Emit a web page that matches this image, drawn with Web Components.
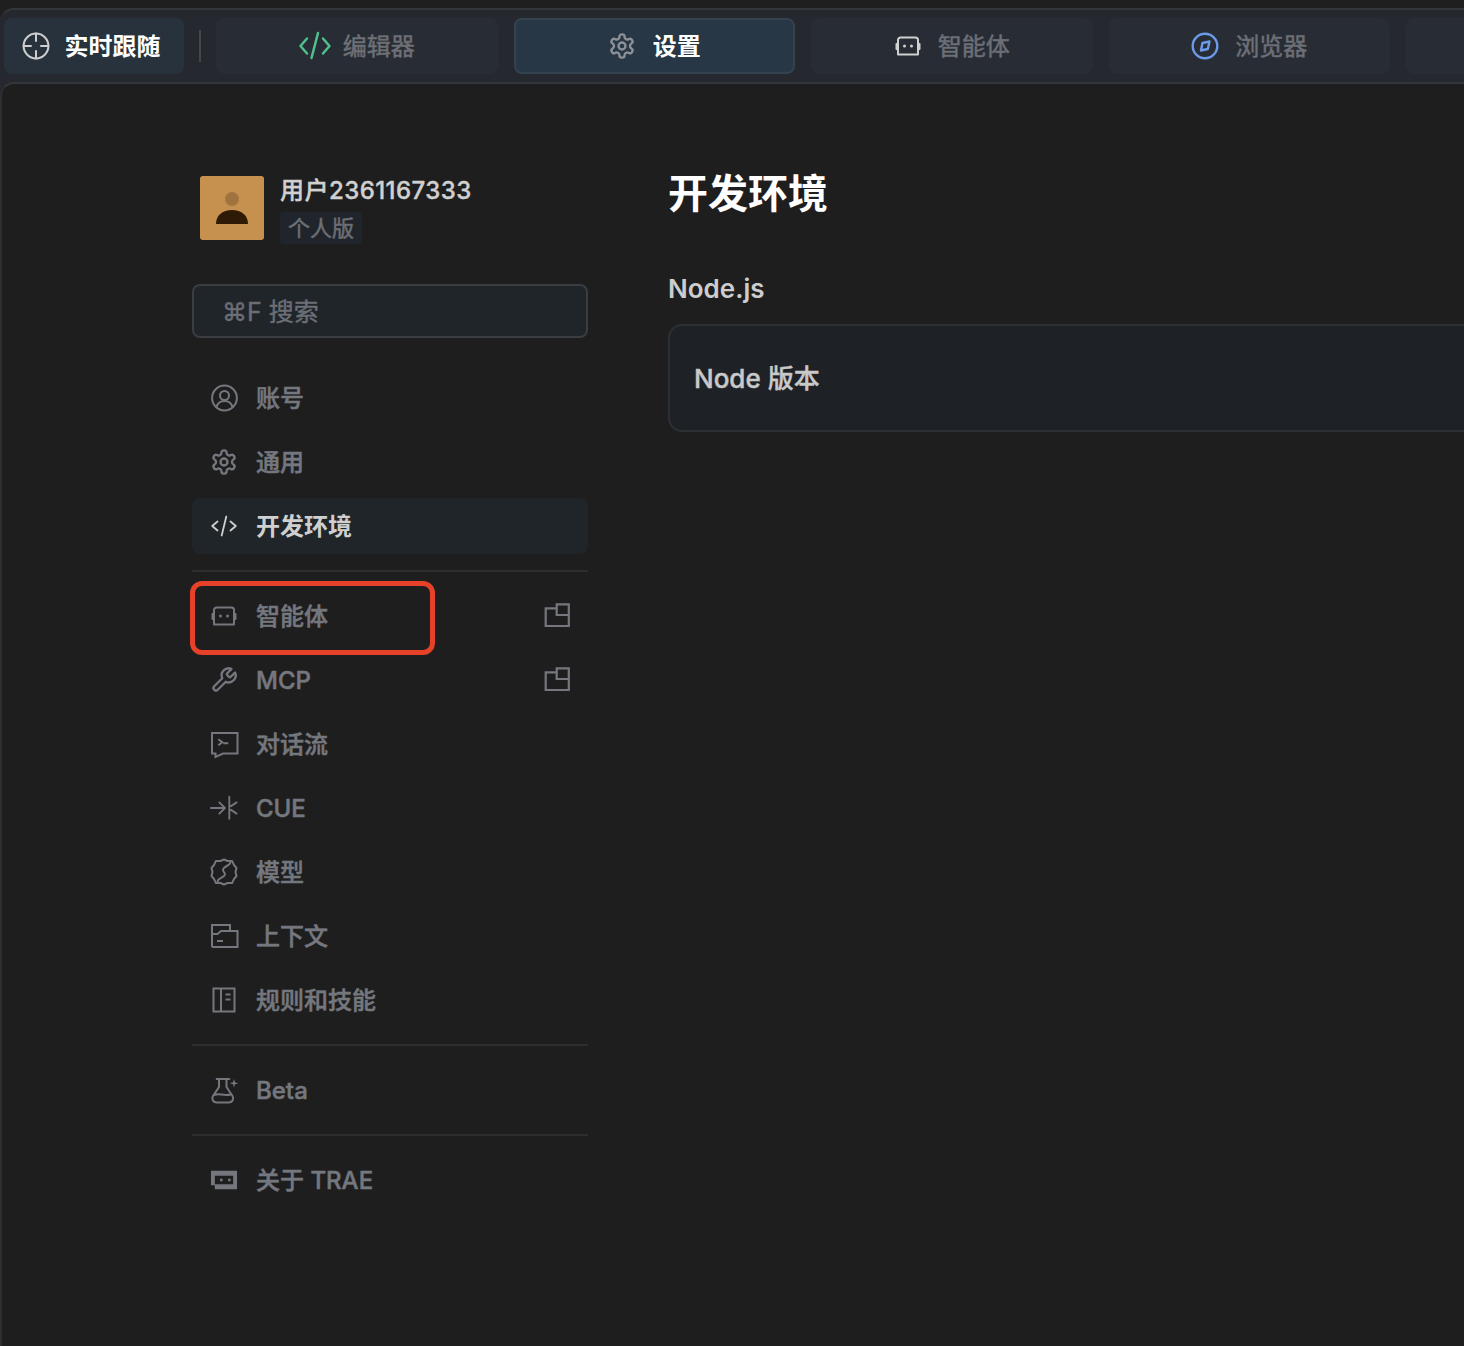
<!DOCTYPE html>
<html lang="zh"><head><meta charset="utf-8"><title>设置</title>
<style>
html,body{margin:0;height:100%;background:#1e1e1e;overflow:hidden}
body{font-family:Inter,"Noto Sans CJK SC",sans-serif;position:relative}
</style></head><body>
<x-app></x-app>
<script>
const gear='<path d="M12.22 2h-.44a2 2 0 0 0-2 2v.18a2 2 0 0 1-1 1.73l-.43.25a2 2 0 0 1-2 0l-.15-.08a2 2 0 0 0-2.73.73l-.22.38a2 2 0 0 0 .73 2.73l.15.1a2 2 0 0 1 1 1.72v.51a2 2 0 0 1-1 1.74l-.15.09a2 2 0 0 0-.73 2.73l.22.38a2 2 0 0 0 2.73.73l.15-.08a2 2 0 0 1 2 0l.43.25a2 2 0 0 1 1 1.73V20a2 2 0 0 0 2 2h.44a2 2 0 0 0 2-2v-.18a2 2 0 0 1 1-1.73l.43-.25a2 2 0 0 1 2 0l.15.08a2 2 0 0 0 2.73-.73l.22-.39a2 2 0 0 0-.73-2.73l-.15-.08a2 2 0 0 1-1-1.74v-.5a2 2 0 0 1 1-1.74l.15-.09a2 2 0 0 0 .73-2.73l-.22-.38a2 2 0 0 0-2.73-.73l-.15.08a2 2 0 0 1-2 0l-.43-.25a2 2 0 0 1-1-1.73V4a2 2 0 0 0-2-2z"/><circle cx="12" cy="12" r="3"/>';
const sq='stroke-linecap="butt" stroke-linejoin="miter"';
const ICONS={
 target:['0 0 28 28','<circle cx="14" cy="14" r="12.4"/><path d="M14 1.6V9M14 19v7.4M1.6 14H9M19 14h7.4"/>'],
 codeL:['0 0 32 32','<path d="M8 8.5 1.500 16 8 23.500M24 8.500 30.500 16 24 23.500M19 3l-6.500 25"/>'],
 code:['0 0 28 28','<path d="M7.500 9.500 2.200 14l5.300 4.500M20.500 9.500l5.300 4.500-5.300 4.500M16.300 4.500l-4.600 19"/>'],
 gear:['0 0 24 24',gear],
 bot:['0 0 28 28','<path d="M4 22.500h20V8a2.500 2.500 0 0 0-2.500-2.500h-15A2.500 2.500 0 0 0 4 8zM4 12H2.500v5H4M24 12h1.500v5H24"/><circle cx="10.500" cy="14" r="1.500" fill="currentColor" stroke="none"/><circle cx="17.500" cy="14" r="1.500" fill="currentColor" stroke="none"/>'],
 compass:['0 0 28 28','<circle cx="14" cy="14" r="12.300"/><path d="M10 18.500 11.500 11 18.500 9.500 16.800 17z"/>'],
 user:['0 0 28 28','<circle cx="14.500" cy="14" r="12.400"/><circle cx="14.500" cy="11.500" r="4.500"/><path d="M6.500 23c1.200-4.300 4-6 8-6s6.800 1.700 8 6"/>'],
 wrench:['0 0 24 24','<path d="M14.700 6.300a1 1 0 0 0 0 1.400l1.600 1.600a1 1 0 0 0 1.400 0l3.770-3.770a6 6 0 0 1-7.940 7.940l-6.910 6.910a2.120 2.120 0 0 1-3-3l6.910-6.910a6 6 0 0 1 7.940-7.940l-3.760 3.760z"/>'],
 chat:['0 0 28 28',`<path ${sq} d="M2 3h25.500v20.500H13l-7.500 3.500v-3.500H2z"/><path ${sq} d="m8.300 9.300 4 3-4 3M13.300 13.300h5"/>`],
 cue:['0 0 30 28','<path d="M1 14h15M10 8l6 6-6 6M20.700 2v23.500M28.500 8l-6 4M28.500 20l-6-4"/>'],
 model:['0 0 28 28','<path d="M14 1.500l3.600 1.500 4.500-.1 1.800 3.900L26.500 10 25.500 14l1 4-2.600 3.200-1.800 3.900-4.500-.1L14 26.500 10.400 25l-4.500.1-1.800-3.900L1.500 18l1-4-1-4 2.600-3.200 1.800-3.900 4.500.1z"/><path d="M20.500 4.500c-1 3.500-6.500 3.500-7.500 7 -.6 2 2.500 3 2 5-1 3.500-6.500 3-7.500 7"/>'],
 folder:['0 0 28 28',`<path ${sq} d="M2 25V3h18v6M2 25h25.500V9H11l-3.500 3H2M7 19h6"/>`],
 book:['0 0 28 28',`<path ${sq} d="M3.500 2.500h21v23h-21zM11 2.500v23M15.500 8.500h5M15.500 13.500h5"/>`],
 beta:['0 0 28 28','<path d="M6.700 3h12.600M9 3v8l-6 9c-2 3 .5 6.500 3.500 6.500H19c3 0 5.500-3.500 3.500-6.500l-6-9V3M4.500 19c4-2.500 9 1.500 16-.5"/><path d="M24 3l1 3.300 3.300 1-3.300 1-1 3.300-1-3.300-3.300-1 3.300-1z" fill="currentColor" stroke="none"/>'],
 about:['0 0 29 28','<path fill-rule="evenodd" fill="currentColor" stroke="none" d="M1 4.500H28V23.500H5V19.500H1zM5 9.500V18.500H24V9.500z"/><circle cx="11.700" cy="14" r="1.500" fill="currentColor" stroke="none"/><circle cx="20" cy="14" r="1.500" fill="currentColor" stroke="none"/>'],
 popout:['0 0 28 28',`<path ${sq} d="M14.700 6.300H3.700V24H26.800V2.300H14.700V13H26.800"/>`]
};
function def(name,html){customElements.define(name,class extends HTMLElement{
  constructor(){super();const r=this.attachShadow({mode:'open'});if(typeof html!=='function')r.innerHTML=html;}
  connectedCallback(){if(typeof html==='function')this.shadowRoot.innerHTML=html(this);}
});}
def('x-icon',h=>{const [vb,b]=ICONS[h.getAttribute('name')]||ICONS.gear;const s=h.getAttribute('size')||28,w=h.getAttribute('w')||2;
 return `<style>:host{display:inline-flex;flex:none;width:${s}px;height:${s}px}svg{display:block;overflow:visible}</style><svg width="${s}" height="${s}" viewBox="${vb}" fill="none" stroke="currentColor" stroke-width="${w}" stroke-linejoin="round" stroke-linecap="round">${b}</svg>`;});
def('x-tab',h=>{const ic=h.getAttribute('icon');const col=h.getAttribute('color')||'#a9abad';
 return `<style>:host{display:flex;align-items:center;justify-content:center;gap:${h.getAttribute('gap')||16}px;box-sizing:border-box;height:56px;flex:none;width:281.500px;background:#282d35;border-radius:8px;color:#6d6f76;font-size:24px;line-height:32px;-webkit-text-stroke:.5px currentColor}
 :host([state=first]){width:180px;background:#28323d;color:#fff;font-weight:700;gap:15px;padding-right:6px;-webkit-text-stroke:0}
 :host([state=active]){background:#283745;border:2px solid #344250;color:#fff;font-weight:700;gap:17px;-webkit-text-stroke:0}
 x-icon{color:${col}} .t{margin-top:2px}</style>${ic?`<x-icon name="${ic}" size="${h.getAttribute('size')||28}" w="${h.getAttribute('w')||2}"></x-icon><span class="t"><slot></slot></span>`:''}`;});
def('x-tabbar',`<style>:host{display:flex;align-items:center;height:72px;flex:none;background:#25282e;border-top:2px solid #33363a;border-top-left-radius:14px;padding-left:4px;overflow:hidden}
 .sep{width:2px;height:32px;background:#44474c;margin:0 15px;flex:none}
 .gap{display:flex;gap:16px}</style>
 <x-tab state="first" icon="target" color="#cfcfcf">实时跟随</x-tab><div class="sep"></div>
 <div class="gap"><x-tab icon="codeL" size="32" gap="12" w="2.500" color="#4fc08d">编辑器</x-tab><x-tab state="active" icon="gear" color="#8d9096">设置</x-tab><x-tab icon="bot" color="#cfd0d0">智能体</x-tab><x-tab icon="compass" w="2.400" color="#6c9ae8">浏览器</x-tab><x-tab></x-tab></div>`);
def('x-profile',`<style>:host{display:flex;gap:16px;padding-left:8px;height:64px;align-items:flex-start}
 .av{width:64px;height:64px;border-radius:3px;background:#c6904f;flex:none;display:block}
 .info{display:flex;flex-direction:column;align-items:flex-start;margin-top:-1px}
 .name{font-size:24px;line-height:32px;color:#d0d0d0;font-weight:500;letter-spacing:.45px;-webkit-text-stroke:.4px currentColor}
 .pill{margin-top:5px;background:#20252b;border-radius:4px;padding:0 8px;height:32px;font-size:22px;line-height:32px;color:#6c6e75;-webkit-text-stroke:.5px currentColor}</style>
 <svg class="av" viewBox="0 0 64 64"><circle cx="32" cy="23" r="7" fill="#a1743f"/><path d="M16 48c0-9 7-14 16-14s16 5 16 14z" fill="#2e1a05"/></svg>
 <div class="info"><div class="name">用户2361167333</div><div class="pill">个人版</div></div>`);
def('x-search',`<style>:host{display:flex;align-items:center;box-sizing:border-box;height:54px;background:#20252a;border:2px solid #3a3d42;border-radius:8px;padding:1px 0 0 28px;color:#6c6e75;font-size:25px;line-height:32px;margin:44px 0 32px;-webkit-text-stroke:.4px currentColor}</style><slot></slot>`);
def('x-nav-item',h=>`<style>:host{display:flex;align-items:center;height:56px;padding:0 18px;gap:18px;border-radius:8px;color:#75777e;font-size:24px;line-height:32px;font-weight:500;box-sizing:border-box;-webkit-text-stroke:.5px currentColor}
 :host([active]){background:#20252a;color:#cfcfcf;font-weight:700;-webkit-text-stroke:0}
 .t{flex:1;white-space:nowrap;margin-top:2px} x-icon{-webkit-text-stroke:0}</style><x-icon name="${h.getAttribute('icon')}" w="${h.getAttribute('w')||2}"></x-icon><span class="t"><slot></slot></span>${h.hasAttribute('popout')?'<x-icon name="popout" w="2.200"></x-icon>':''}`);
def('x-divider',`<style>:host{display:block;height:2px;background:#2c2d2f;margin:16px 0}</style>`);
def('x-sidebar',`<style>:host{display:block;width:396px;flex:none}
 .g{display:flex;flex-direction:column;gap:8px}</style>
 <x-profile></x-profile><x-search>⌘F 搜索</x-search>
 <div class="g"><x-nav-item icon="user">账号</x-nav-item><x-nav-item icon="gear">通用</x-nav-item><x-nav-item icon="code" active w="1.800">开发环境</x-nav-item></div>
 <x-divider></x-divider>
 <div class="g"><x-nav-item icon="bot" popout>智能体</x-nav-item><x-nav-item icon="wrench" popout>MCP</x-nav-item><x-nav-item icon="chat">对话流</x-nav-item><x-nav-item icon="cue">CUE</x-nav-item><x-nav-item icon="model">模型</x-nav-item><x-nav-item icon="folder">上下文</x-nav-item><x-nav-item icon="book">规则和技能</x-nav-item></div>
 <x-divider></x-divider>
 <x-nav-item icon="beta">Beta</x-nav-item>
 <x-divider></x-divider>
 <x-nav-item icon="about">关于 TRAE</x-nav-item>`);
def('x-content',`<style>:host{display:block;flex:1;min-width:0;margin-right:-40px}
 h1{margin:-10px 0 0;font-size:40px;line-height:56px;font-weight:700;color:#fff}
 h2{margin:49px 0 0;font-size:26px;line-height:36px;font-weight:600;color:#cdcdcd}
 .card{margin-top:17px;height:108px;box-sizing:border-box;background:#1e2226;border:2px solid #2c2f33;border-radius:14px;padding:0 24px 3px;display:flex;align-items:center;font-size:26px;font-weight:500;color:#c9c9c9;-webkit-text-stroke:.4px currentColor}</style>
 <h1>开发环境</h1><h2>Node.js</h2><div class="card">Node 版本</div>`);
def('x-app',`<style>:host{display:flex;flex-direction:column;height:100vh;padding-top:8px;box-sizing:border-box;background:#1f1f1f;position:relative;overflow:hidden}
 .wrap{flex:1;display:flex;background:#25282e;min-height:0}
 .panel{flex:1;display:flex;gap:80px;padding:92px 0 0 190px;background:#1e1e1e;border-top:2px solid #33363a;border-left:2px solid #2c2e31;border-top-left-radius:14px;min-width:0}
 .mark{position:absolute;left:190px;top:581px;width:245px;height:74px;box-sizing:border-box;border:5px solid #e8412a;border-radius:12px;pointer-events:none}</style>
 <x-tabbar></x-tabbar>
 <div class="wrap"><div class="panel"><x-sidebar></x-sidebar><x-content></x-content></div></div>
 <div class="mark"></div>`);
</script>
</body></html>
